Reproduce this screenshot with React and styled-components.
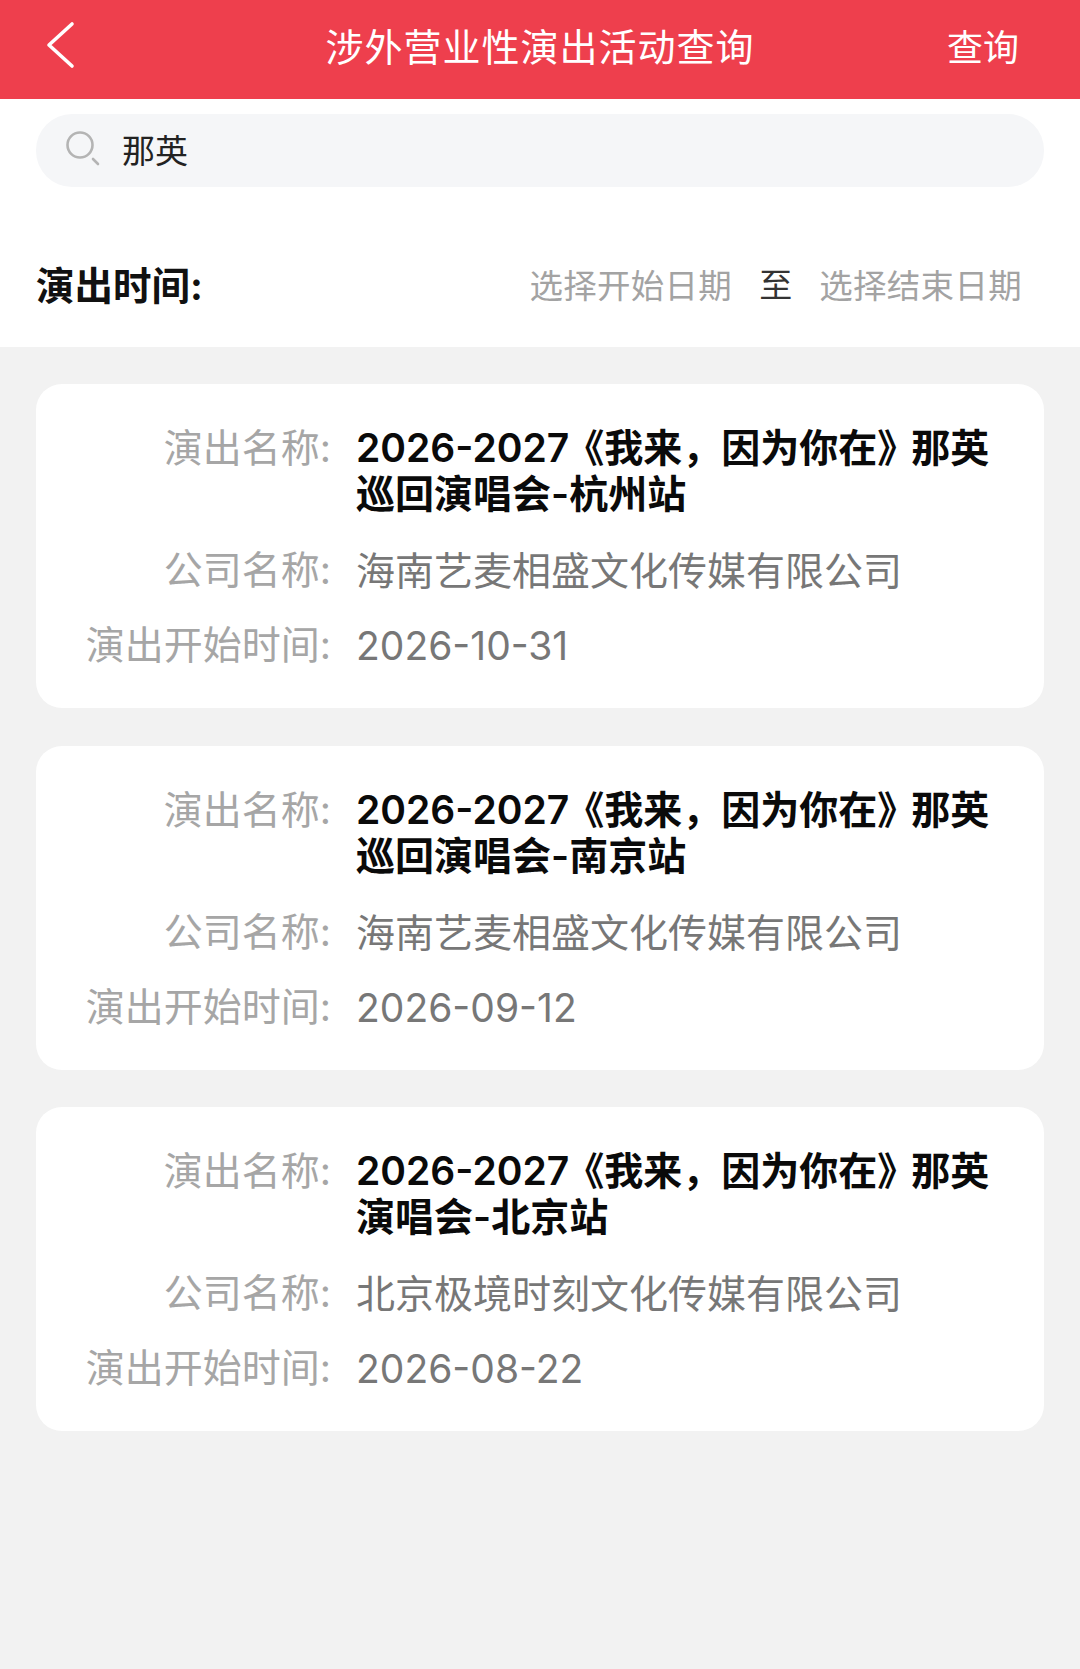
import React from 'react';
import styled, { createGlobalStyle } from 'styled-components';

const GlobalStyle = createGlobalStyle`
  html, body {
    margin: 0;
    padding: 0;
    background: #f2f2f2;
    font-family: Inter, "Noto Sans CJK SC", sans-serif;
  }
  * {
    box-sizing: border-box;
  }
`;

const Page = styled.div`
  width: 1080px;
  height: 1669px;
  overflow: hidden;
  background: #f2f2f2;
`;

const Header = styled.div`
  height: 99px;
  background: #ee3f4d;
  color: #fff;
  display: grid;
  grid-template-columns: 180px 1fr 180px;
  align-items: center;
  padding-bottom: 10px;
`;

const BackButton = styled.div`
  display: flex;
  align-items: center;
  padding-left: 46px;
`;

const HeaderTitle = styled.div`
  font-size: 38px;
  letter-spacing: 1px;
  text-align: center;
  white-space: nowrap;
`;

const HeaderAction = styled.div`
  font-size: 36px;
  text-align: right;
  padding-right: 61px;
`;

const FilterPanel = styled.div`
  background: #fff;
  height: 248px;
  padding: 15px 36px 0;
`;

const SearchBar = styled.div`
  height: 73px;
  border-radius: 36px;
  background: #f5f6f8;
  display: flex;
  align-items: center;
  gap: 21px;
  padding: 0 0 4px 29px;
`;

const SearchText = styled.div`
  font-size: 33px;
  color: #222;
`;

const DateRow = styled.div`
  display: flex;
  align-items: center;
  margin-top: 71px;
  height: 50px;
`;

const DateLabel = styled.div`
  font-size: 38.5px;
  font-weight: 700;
  color: #111;
  flex: 1;
`;

const DateValue = styled.div`
  font-size: 33.5px;
  color: #a3a3a3;
  letter-spacing: 0.3px;
`;

const DateSep = styled.div`
  font-size: 33px;
  color: #333;
  margin: 0 27px;
`;

const DateEnd = styled.div`
  width: 22px;
`;

const CardList = styled.div`
  display: flex;
  flex-direction: column;
  gap: 37.5px;
  padding: 37px 36px 0;
`;

const Card = styled.div`
  height: 324px;
  background: #fff;
  border-radius: 26px;
  padding: 41px 40px 0 0;
`;

const Row = styled.div`
  display: grid;
  grid-template-columns: 295px 1fr;
  margin-bottom: ${(p) => p.$gap}px;
`;

const Label = styled.div`
  font-size: 39px;
  line-height: 46px;
  color: #a6a6a6;
  text-align: right;
  white-space: nowrap;
`;

const Value = styled.div`
  font-size: 39px;
  line-height: 47px;
  padding-left: 25px;
  color: #777;
`;

const NameValue = styled(Value)`
  color: #0a0a0a;
  font-weight: 600;
  line-height: 46px;
`;

// the reference font sets these brackets narrower than a full em
const OpenQuote = styled.span`
  font-feature-settings: "halt";
  padding-left: 15.5px;
`;

const CloseQuote = styled.span`
  font-feature-settings: "halt";
  padding-right: 14.5px;
`;

const shows = [
  {
    tail: '那英巡回演唱会-杭州站',
    company: '海南艺麦相盛文化传媒有限公司',
    date: '2026-10-31',
  },
  {
    tail: '那英巡回演唱会-南京站',
    company: '海南艺麦相盛文化传媒有限公司',
    date: '2026-09-12',
  },
  {
    tail: '那英演唱会-北京站',
    company: '北京极境时刻文化传媒有限公司',
    date: '2026-08-22',
  },
];

const App = () => {
  return (
    <Page>
      <GlobalStyle />
      <Header>
        <BackButton>
          <svg width="30" height="48" viewBox="0 0 30 48" fill="none">
            <path d="M26 3 L3 24 L26 45" stroke="#fff" strokeWidth="3.6" strokeLinecap="round" strokeLinejoin="round" />
          </svg>
        </BackButton>
        <HeaderTitle>涉外营业性演出活动查询</HeaderTitle>
        <HeaderAction>查询</HeaderAction>
      </Header>

      <FilterPanel>
        <SearchBar>
          <svg width="36" height="36" viewBox="0 0 36 36" fill="none">
            <circle cx="15" cy="14" r="12.5" stroke="#b4b4b4" strokeWidth="2.6" />
            <path d="M28 28 L33 33" stroke="#b4b4b4" strokeWidth="2.6" strokeLinecap="round" />
          </svg>
          <SearchText>那英</SearchText>
        </SearchBar>
        <DateRow>
          <DateLabel>演出时间:</DateLabel>
          <DateValue>选择开始日期</DateValue>
          <DateSep>至</DateSep>
          <DateValue>选择结束日期</DateValue>
          <DateEnd />
        </DateRow>
      </FilterPanel>

      <CardList>
        {shows.map((show) => (
          <Card key={show.date}>
            <Row $gap={30}>
              <Label>演出名称:</Label>
              <NameValue>
                2026-2027<OpenQuote>《</OpenQuote>我来，因为你在<CloseQuote>》</CloseQuote>{show.tail}
              </NameValue>
            </Row>
            <Row $gap={28}>
              <Label>公司名称:</Label>
              <Value>{show.company}</Value>
            </Row>
            <Row $gap={0}>
              <Label>演出开始时间:</Label>
              <Value>{show.date}</Value>
            </Row>
          </Card>
        ))}
      </CardList>
    </Page>
  );
};

export default App;
